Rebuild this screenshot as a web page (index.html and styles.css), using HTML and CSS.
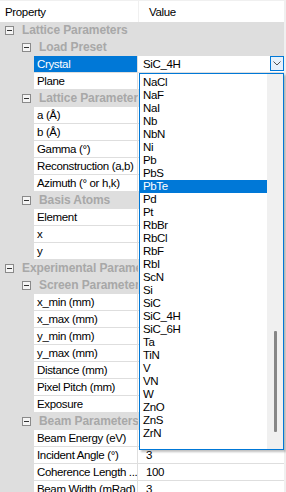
FILE: index.html
```html
<!DOCTYPE html>
<html>
<head>
<meta charset="utf-8">
<link rel="stylesheet" href="styles.css">
</head>
<body>
<div class="grid">
  <div class="head">
    <div class="hprop">Property</div>
    <div class="hval">Value</div>
  </div>

  <div class="row cat l1"><span class="box"></span><span class="cname">Lattice Parameters</span></div>
  <div class="row cat l2"><span class="box"></span><span class="cname">Load Preset</span></div>
  <div class="row leaf sel">
    <div class="prop">Crystal</div>
    <div class="val combo"><span>SiC_4H</span>
      <span class="btn"><svg width="8" height="5" viewBox="0 0 8 5"><path d="M0.5 0.5 L4 4 L7.5 0.5" fill="none" stroke="#505050" stroke-width="1"/></svg></span>
    </div>
  </div>
  <div class="row leaf"><div class="prop">Plane</div><div class="val"></div></div>
  <div class="row cat l2"><span class="box"></span><span class="cname">Lattice Parameters</span></div>
  <div class="row leaf"><div class="prop">a (Å)</div><div class="val"></div></div>
  <div class="row leaf"><div class="prop">b (Å)</div><div class="val"></div></div>
  <div class="row leaf"><div class="prop">Gamma (°)</div><div class="val"></div></div>
  <div class="row leaf"><div class="prop">Reconstruction (a,b)</div><div class="val"></div></div>
  <div class="row leaf"><div class="prop">Azimuth (° or h,k)</div><div class="val"></div></div>
  <div class="row cat l2"><span class="box"></span><span class="cname">Basis Atoms</span></div>
  <div class="row leaf"><div class="prop">Element</div><div class="val"></div></div>
  <div class="row leaf"><div class="prop">x</div><div class="val"></div></div>
  <div class="row leaf"><div class="prop">y</div><div class="val"></div></div>
  <div class="row cat l1"><span class="box"></span><span class="cname">Experimental Parameters</span></div>
  <div class="row cat l2"><span class="box"></span><span class="cname">Screen Parameters</span></div>
  <div class="row leaf"><div class="prop">x_min (mm)</div><div class="val"></div></div>
  <div class="row leaf"><div class="prop">x_max (mm)</div><div class="val"></div></div>
  <div class="row leaf"><div class="prop">y_min (mm)</div><div class="val"></div></div>
  <div class="row leaf"><div class="prop">y_max (mm)</div><div class="val"></div></div>
  <div class="row leaf"><div class="prop">Distance (mm)</div><div class="val"></div></div>
  <div class="row leaf"><div class="prop">Pixel Pitch (mm)</div><div class="val"></div></div>
  <div class="row leaf"><div class="prop">Exposure</div><div class="val"></div></div>
  <div class="row cat l2"><span class="box"></span><span class="cname">Beam Parameters</span></div>
  <div class="row leaf"><div class="prop">Beam Energy (eV)</div><div class="val"></div></div>
  <div class="row leaf"><div class="prop">Incident Angle (°)</div><div class="val">3</div></div>
  <div class="row leaf"><div class="prop">Coherence Length ...</div><div class="val">100</div></div>
  <div class="row leaf"><div class="prop">Beam Width (mRad)</div><div class="val">3</div></div>
</div>

<div class="dropdown">
  <ul class="items">
    <li>NaCl</li><li>NaF</li><li>NaI</li><li>Nb</li><li>NbN</li><li>Ni</li><li>Pb</li><li>PbS</li>
    <li class="hl">PbTe</li><li>Pd</li><li>Pt</li><li>RbBr</li><li>RbCl</li><li>RbF</li><li>RbI</li>
    <li>ScN</li><li>Si</li><li>SiC</li><li>SiC_4H</li><li>SiC_6H</li><li>Ta</li><li>TiN</li><li>V</li>
    <li>VN</li><li>W</li><li>ZnO</li><li>ZnS</li><li>ZrN</li>
  </ul>
  <div class="sbar"><div class="thumb"></div></div>
</div>
</body>
</html>
```
FILE: styles.css
```css
html, body {
  margin: 0;
  padding: 0;
}
body {
  background: #f0f0f0;
  width: 286px;
  height: 492px;
  overflow: hidden;
  position: relative;
  font-family: "Liberation Sans", Arial, sans-serif;
  font-size: 11.5px;
  letter-spacing: -0.35px;
  color: #000;
}
.grid {
  width: 284px;
  background: #dedede;
}
.head {
  display: flex;
  height: 21px;
  margin-top: 1px;
  background: #f0f0f0;
  gap: 1px;
}
.hprop, .hval {
  background: #fff;
  line-height: 20px;
  padding-top: 1px;
}
.hprop {
  width: 133px;
  padding-left: 5px;
}
.hval {
  flex: 1;
  padding-left: 10px;
}
.row {
  display: flex;
  align-items: stretch;
  height: 16px;
  border-bottom: 1px solid #dedede;
  line-height: 16px;
  white-space: nowrap;
}
.cat {
  background: #dedede;
  color: #a8a8a8;
  font-weight: bold;
  font-size: 12px;
  letter-spacing: -0.1px;
  align-items: center;
}
.cat .cname {
  overflow: hidden;
  line-height: 16px;
}
.l1 { padding-left: 5px; }
.l1 .cname { width: 116px; margin-left: 8px; }
.l2 { padding-left: 22px; }
.l2 .cname { width: 99px; margin-left: 8px; }
.box {
  flex: none;
  width: 7px;
  height: 7px;
  border: 1px solid #8a8a8a;
  background: #f4f4f4;
  position: relative;
  box-sizing: content-box;
}
.box::after {
  content: "";
  position: absolute;
  left: 1px;
  top: 3px;
  width: 5px;
  height: 1px;
  background: #333;
}
.leaf {
  padding-left: 34px;
  gap: 1px;
}
.prop {
  width: 100px;
  padding-left: 3px;
  background: #fff;
  overflow: hidden;
}
.val {
  flex: 1;
  background: #fff;
  padding-left: 8px;
  position: relative;
}
.sel .prop {
  background: #0078d7;
  color: #fff;
}
.combo {
  padding-left: 5px;
}
.btn {
  position: absolute;
  right: 0;
  top: 0;
  width: 12px;
  height: 13px;
  border: 1px solid #0078d7;
  background: #e5f1fb;
  display: flex;
  align-items: center;
  justify-content: center;
}
.dropdown {
  position: absolute;
  left: 139px;
  top: 73px;
  width: 143px;
  height: 375px;
  border: 1px solid #0078d7;
  background: #fff;
  box-shadow: 2px 2px 2px rgba(0, 0, 0, 0.25);
  display: flex;
}
.items {
  list-style: none;
  margin: 0;
  padding: 2px 0 0 0;
  flex: 1;
}
.items li {
  height: 13px;
  line-height: 13px;
  padding-left: 3px;
}
.items li.hl {
  background: #0078d7;
  color: #fff;
}
.sbar {
  width: 16px;
  background: #f0f0f0;
  position: relative;
}
.thumb {
  position: absolute;
  left: 7px;
  top: 257px;
  width: 3px;
  height: 101px;
  border-radius: 1px;
  background: #868686;
}
```
